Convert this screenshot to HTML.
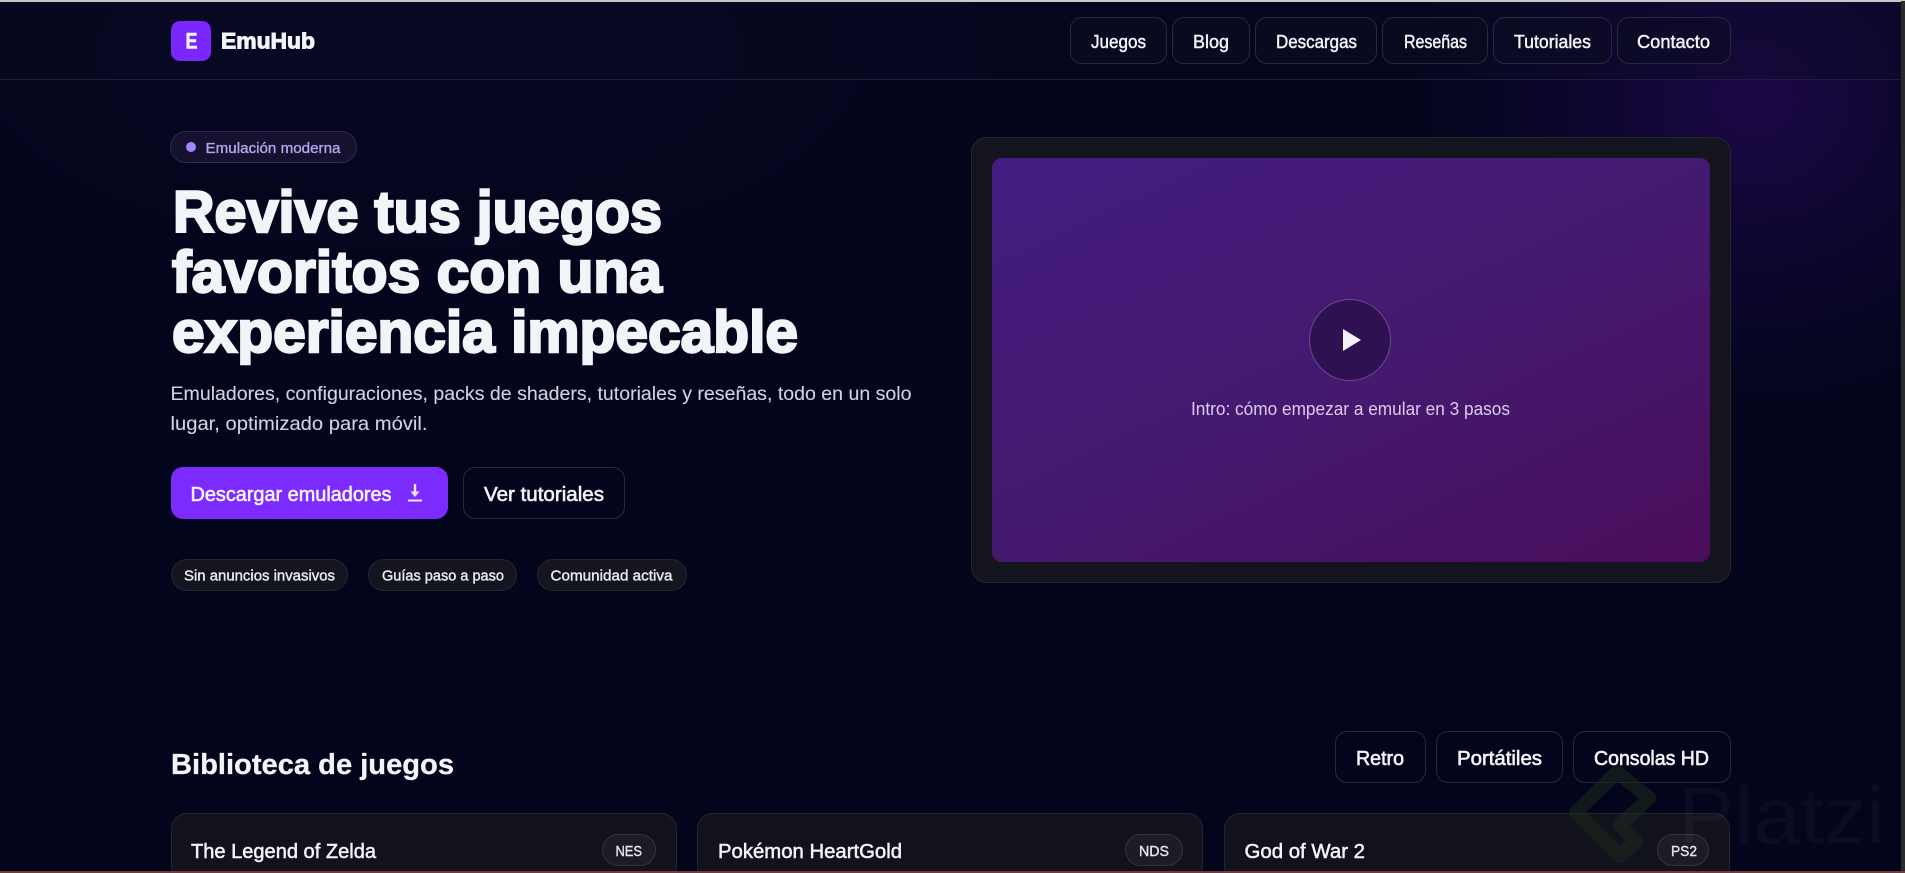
<!DOCTYPE html>
<html lang="es">
<head>
<meta charset="utf-8">
<title>EmuHub</title>
<style>
html,body{margin:0;padding:0;width:1905px;height:873px;overflow:hidden;background:#03051c}
body{position:relative;font-family:"Liberation Sans",sans-serif}
.bg{position:absolute;left:0;top:0;width:1905px;height:873px;background:
radial-gradient(ellipse 340px 310px at 1755px 100px,rgba(50,10,110,.5),rgba(50,10,110,.2) 55%,rgba(50,10,110,0) 100%),
radial-gradient(ellipse 600px 260px at 420px 60px,rgba(40,20,90,.09),rgba(40,20,90,0) 100%),
#03051c}
.b{position:absolute;box-sizing:border-box;border:1px solid #272a3c}
header.b{left:0;top:0;width:1902px;height:80px;border:0;border-bottom:1px solid #1f2033;background:rgba(14,12,40,.3)}
.nav{top:17px;height:47px;border-radius:12px;background:rgba(12,12,34,.5)}
.logo{left:171px;top:21px;width:40px;height:40px;border:0;border-radius:9px;background:#7a26ff}
.badge{left:170px;top:131px;width:187px;height:32px;border-radius:16px;background:#15112f;border-color:#2f2a52}
.dot{position:absolute;left:186px;top:142px;width:10px;height:10px;border-radius:50%;background:#a684ff}
.card{left:971px;top:137px;width:760px;height:446px;border-radius:16px;background:#14141e;border-color:#272733}
.video{position:absolute;left:992px;top:158px;width:718px;height:404px;border-radius:10px;background:linear-gradient(155deg,#431c80 0%,#441a70 50%,#4a0d5a 100%)}
.play{left:1309px;top:299px;width:82px;height:82px;border-radius:50%;background:#2e1150;border-color:#6b4a8c}
.btn{top:467px;height:52px;border-radius:12px}
.prim{left:171px;width:277px;border:0;background:#7c2bff}
.sec{left:463px;width:162px;background:#04051c}
.chip{top:559px;height:32px;border-radius:16px;background:#14151f;border-color:#25262f}
.fil{top:731px;height:52px;border-radius:12px;background:#04051c}
.gc{top:813px;height:70px;width:506px;border-radius:16px;background:#12121c;border-color:#25262f}
.pill{top:834px;height:32px;border-radius:16px;background:#1c1c27;border-color:#33343f}
.topl{position:absolute;left:0;top:0;width:1905px;height:1.5px;background:#c8c8c8}
.rs{position:absolute;left:1901px;top:1px;width:4px;height:870px;background:#2b2b2b}
.bot{position:absolute;left:0;top:871px;width:1905px;height:2px;background:#6b3d3d}
svg{position:absolute;left:0;top:0}
text{font-family:"Liberation Sans",sans-serif}
</style>
</head>
<body>
<div class="bg"></div>
<header class="b"></header>
<div class="b logo"></div>
<div class="b nav" style="left:1070px;width:97px"></div>
<div class="b nav" style="left:1172px;width:78px"></div>
<div class="b nav" style="left:1255px;width:122px"></div>
<div class="b nav" style="left:1382px;width:106px"></div>
<div class="b nav" style="left:1493px;width:119px"></div>
<div class="b nav" style="left:1617px;width:114px"></div>
<div class="b badge"></div><div class="dot"></div>
<div class="b card"></div><div class="video"></div><div class="b play"></div>
<div class="b btn prim"></div><div class="b btn sec"></div>
<div class="b chip" style="left:171px;width:177px"></div>
<div class="b chip" style="left:368px;width:149px"></div>
<div class="b chip" style="left:537px;width:150px"></div>
<div class="b fil" style="left:1335px;width:91px"></div>
<div class="b fil" style="left:1436px;width:127px"></div>
<div class="b fil" style="left:1573px;width:158px"></div>
<div class="b gc" style="left:171px"></div>
<div class="b gc" style="left:697px"></div>
<div class="b gc" style="left:1224px"></div>
<div class="b pill" style="left:602px;width:54px"></div>
<div class="b pill" style="left:1125px;width:58px"></div>
<div class="b pill" style="left:1657px;width:52px"></div>

<svg width="1905" height="873" viewBox="0 0 1905 873">
<g fill="#f3f4f8">
<text x="185.500" y="48.500" font-size="22" font-weight="700" stroke="#f3f4f8" stroke-width=".6" textLength="12" lengthAdjust="spacingAndGlyphs">E</text>
<text x="221" y="48.500" font-size="22" font-weight="700" stroke="#f3f4f8" stroke-width="1" textLength="94" lengthAdjust="spacingAndGlyphs">EmuHub</text>
<g font-size="18" stroke="#f3f4f8" stroke-width=".45">
<text x="1091" y="48" textLength="55" lengthAdjust="spacingAndGlyphs">Juegos</text>
<text x="1193" y="48" textLength="36" lengthAdjust="spacingAndGlyphs">Blog</text>
<text x="1276" y="48" textLength="81" lengthAdjust="spacingAndGlyphs">Descargas</text>
<text x="1404" y="48" textLength="63" lengthAdjust="spacingAndGlyphs">Reseñas</text>
<text x="1514" y="48" textLength="77" lengthAdjust="spacingAndGlyphs">Tutoriales</text>
<text x="1637" y="48" textLength="73" lengthAdjust="spacingAndGlyphs">Contacto</text>
</g>
<text x="205.500" y="153" font-size="15" fill="#b7a4ee" stroke="#b7a4ee" stroke-width=".35" textLength="135" lengthAdjust="spacingAndGlyphs">Emulación moderna</text>
<g font-size="58" font-weight="700" stroke="#f3f4f8" stroke-width="2.400">
<text x="173" y="232" textLength="489" lengthAdjust="spacingAndGlyphs">Revive tus juegos</text>
<text x="172" y="292" textLength="490" lengthAdjust="spacingAndGlyphs">favoritos con una</text>
<text x="172" y="352" textLength="626" lengthAdjust="spacingAndGlyphs">experiencia impecable</text>
</g>
<g font-size="19.500" fill="#d0d3de" stroke="#d0d3de" stroke-width=".1">
<text x="170.500" y="400" textLength="741" lengthAdjust="spacingAndGlyphs">Emuladores, configuraciones, packs de shaders, tutoriales y reseñas, todo en un solo</text>
<text x="170.500" y="430" textLength="257" lengthAdjust="spacingAndGlyphs">lugar, optimizado para móvil.</text>
</g>
<g font-size="20" stroke-width=".6">
<text x="190.500" y="501" fill="#f6f0ff" stroke="#f6f0ff" textLength="201" lengthAdjust="spacingAndGlyphs">Descargar emuladores</text>
<text x="484" y="501" stroke="#f3f4f8" textLength="120" lengthAdjust="spacingAndGlyphs">Ver tutoriales</text>
</g>
<path d="M413.800 484H416.200V491.500H419.500L415 497L410.500 491.500H413.800Z" fill="#f1e6ff"/>
<path d="M408 499.500H422V501.500H408Z" fill="#f1e6ff"/>
<g font-size="14.500" fill="#e8e9f0" stroke="#e8e9f0" stroke-width=".4">
<text x="184" y="580.500" textLength="151" lengthAdjust="spacingAndGlyphs">Sin anuncios invasivos</text>
<text x="382" y="580.500" textLength="122" lengthAdjust="spacingAndGlyphs">Guías paso a paso</text>
<text x="550.500" y="580.500" textLength="122" lengthAdjust="spacingAndGlyphs">Comunidad activa</text>
</g>
<path d="M1343 329L1361 340L1343 351Z" fill="#f5f1fa"/>
<text x="1191" y="415" font-size="18" fill="#dccbf0" textLength="319" lengthAdjust="spacingAndGlyphs">Intro: cómo empezar a emular en 3 pasos</text>
<text x="171" y="774" font-size="29" font-weight="700" stroke="#f3f4f8" stroke-width=".3" textLength="283" lengthAdjust="spacingAndGlyphs">Biblioteca de juegos</text>
<g font-size="20" stroke="#f3f4f8" stroke-width=".6">
<text x="1356" y="765" textLength="48" lengthAdjust="spacingAndGlyphs">Retro</text>
<text x="1457" y="765" textLength="85" lengthAdjust="spacingAndGlyphs">Portátiles</text>
<text x="1594" y="765" textLength="115" lengthAdjust="spacingAndGlyphs">Consolas HD</text>
<text x="191" y="858" textLength="185" lengthAdjust="spacingAndGlyphs" stroke-width=".5">The Legend of Zelda</text>
<text x="718" y="858" textLength="184" lengthAdjust="spacingAndGlyphs" stroke-width=".5">Pokémon HeartGold</text>
<text x="1244.500" y="858" textLength="120.500" lengthAdjust="spacingAndGlyphs" stroke-width=".5">God of War 2</text>
</g>
<g font-size="14.500" fill="#e3e4ec" stroke="#e3e4ec" stroke-width=".4">
<text x="615.500" y="856" textLength="26.500" lengthAdjust="spacingAndGlyphs">NES</text>
<text x="1139" y="856" textLength="30" lengthAdjust="spacingAndGlyphs">NDS</text>
<text x="1671" y="856" textLength="26" lengthAdjust="spacingAndGlyphs">PS2</text>
</g>
</g>
<g>
<path d="M1620 825L1649 798L1617 772L1576 812L1620 856L1636 842L1620 825" fill="none" stroke="#1a261b" stroke-width="14" stroke-linejoin="round" stroke-linecap="round" opacity=".6"/>
<text x="1678" y="843" font-size="80" fill="#ffffff" fill-opacity=".03" textLength="207" lengthAdjust="spacingAndGlyphs">Platzi</text>
</g>
</svg>
<div class="topl"></div><div class="rs"></div><div class="bot"></div>
</body>
</html>
